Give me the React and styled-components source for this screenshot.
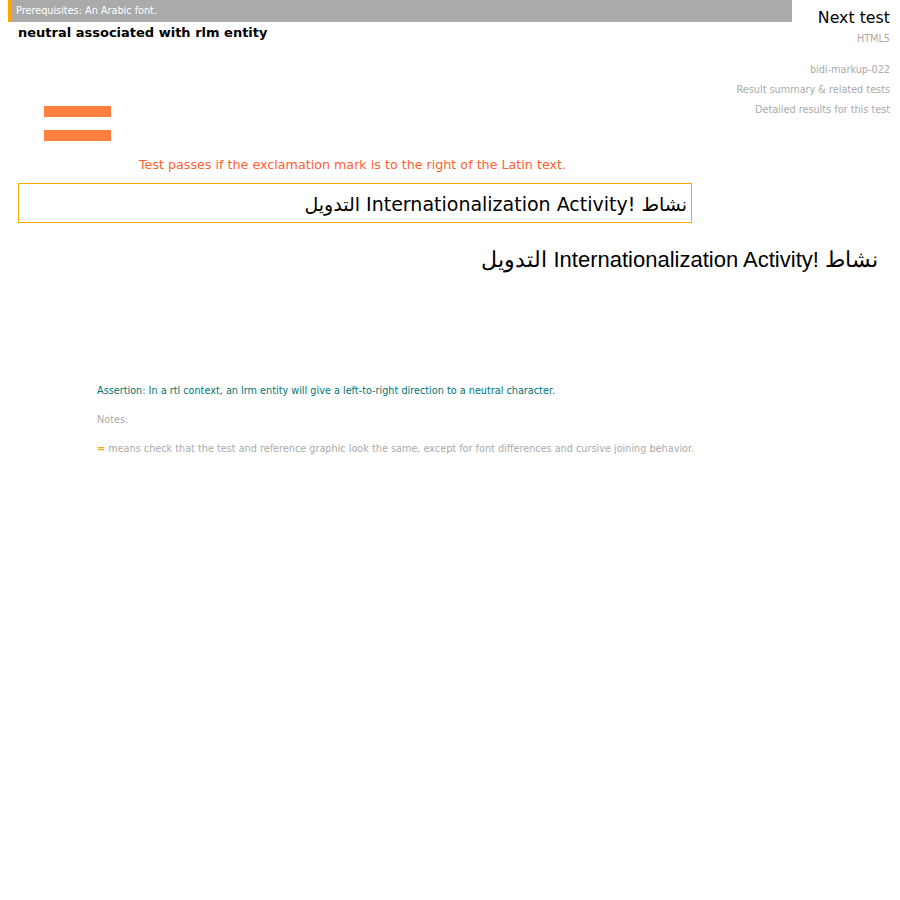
import React from 'react'
import styled, { createGlobalStyle } from 'styled-components'

const Global = createGlobalStyle`
  html, body {
    margin: 0;
    padding: 0;
    background: #fff;
    font-family: "DejaVu Sans", sans-serif;
  }
`

const Page = styled.div`
  width: 900px;
  height: 900px;
  overflow: hidden;
`

const Links = styled.div`
  float: right;
  display: flex;
  flex-direction: column;
  align-items: flex-end;
  padding: 8px 10px 0 0;
  white-space: nowrap;
`

const HeaderLeft = styled.div`
  padding-left: 8px;
  width: 784px;
`

const PrereqBar = styled.div`
  height: 22px;
  background: #aaaaaa;
  border-left: 4px solid #ffa500;
  color: #fff;
  font-size: 9.7px;
  line-height: 22px;
  padding-left: 4px;
`

const Title = styled.h1`
  margin: 3px 0 0 10px;
  font-size: 13px;
  font-weight: bold;
  color: #000;
  line-height: 16px;
`

const NextTest = styled.div`
  font-size: 15.8px;
  color: #000;
  line-height: 20px;
`

const Small = styled.div`
  font-size: 9.7px;
  color: #aaaaaa;
  line-height: 12px;
  margin-top: ${p => p.gap || 8}px;
  font-weight: 500;
`

const Equals = styled.div`
  display: flex;
  flex-direction: column;
  gap: 13px;
  margin: 65px 0 0 44px;
  width: 67px;
`

const Bar = styled.div`
  height: 11px;
  background: #ff8040;
`

const Instructions = styled.p`
  margin: 16px 0 0 139px;
  font-size: 12.7px;
  color: #ff5f33;
  line-height: 16px;
`

const TestBox = styled.div`
  margin: 10px 0 0 18px;
  height: 38px;
  width: 668px;
  border: 1px solid #ffa500;
  direction: rtl;
  font-size: 19px;
  line-height: 40px;
  padding-right: 4px;
  color: #000;
`

const RefLine = styled.div`
  margin: 23px 22px 0 0;
  direction: rtl;
  font-family: "Liberation Sans", Arial, sans-serif;
  font-size: 22px;
  line-height: 28px;
  color: #000;
`

const Notes = styled.div`
  margin: 111px 0 0 97px;
  font-size: 9.7px;
  line-height: 12px;
`

const Assertion = styled.p`
  margin: 0;
  color: #007575;
`

const NoteText = styled.p`
  margin: 17px 0 0;
  color: #aaaaaa;
`

const Mark = styled.span`
  color: #ffa500;
  font-weight: bold;
`

export default function App() {
  return (
    <Page>
      <Global />
      <Links>
        <NextTest>Next test</NextTest>
        <Small gap={5}>HTML5</Small>
        <Small gap={19}>bidi-markup-022</Small>
        <Small>Result summary &amp; related tests</Small>
        <Small>Detailed results for this test</Small>
      </Links>
      <HeaderLeft>
        <PrereqBar>Prerequisites: An Arabic font.</PrereqBar>
        <Title>neutral associated with rlm entity</Title>
      </HeaderLeft>
      <Equals>
        <Bar />
        <Bar />
      </Equals>
      <Instructions>Test passes if the exclamation mark is to the right of the Latin text.</Instructions>
      <TestBox>نشاط !Internationalization Activity&#x200E; التدويل</TestBox>
      <RefLine>نشاط <bdo dir="ltr">Internationalization Activity!</bdo> التدويل</RefLine>
      <Notes>
        <Assertion>Assertion: In a rtl context, an lrm entity will give a left-to-right direction to a neutral character.</Assertion>
        <NoteText>Notes:</NoteText>
        <NoteText><Mark>=</Mark> means check that the test and reference graphic look the same, except for font differences and cursive joining behavior.</NoteText>
      </Notes>
    </Page>
  )
}
